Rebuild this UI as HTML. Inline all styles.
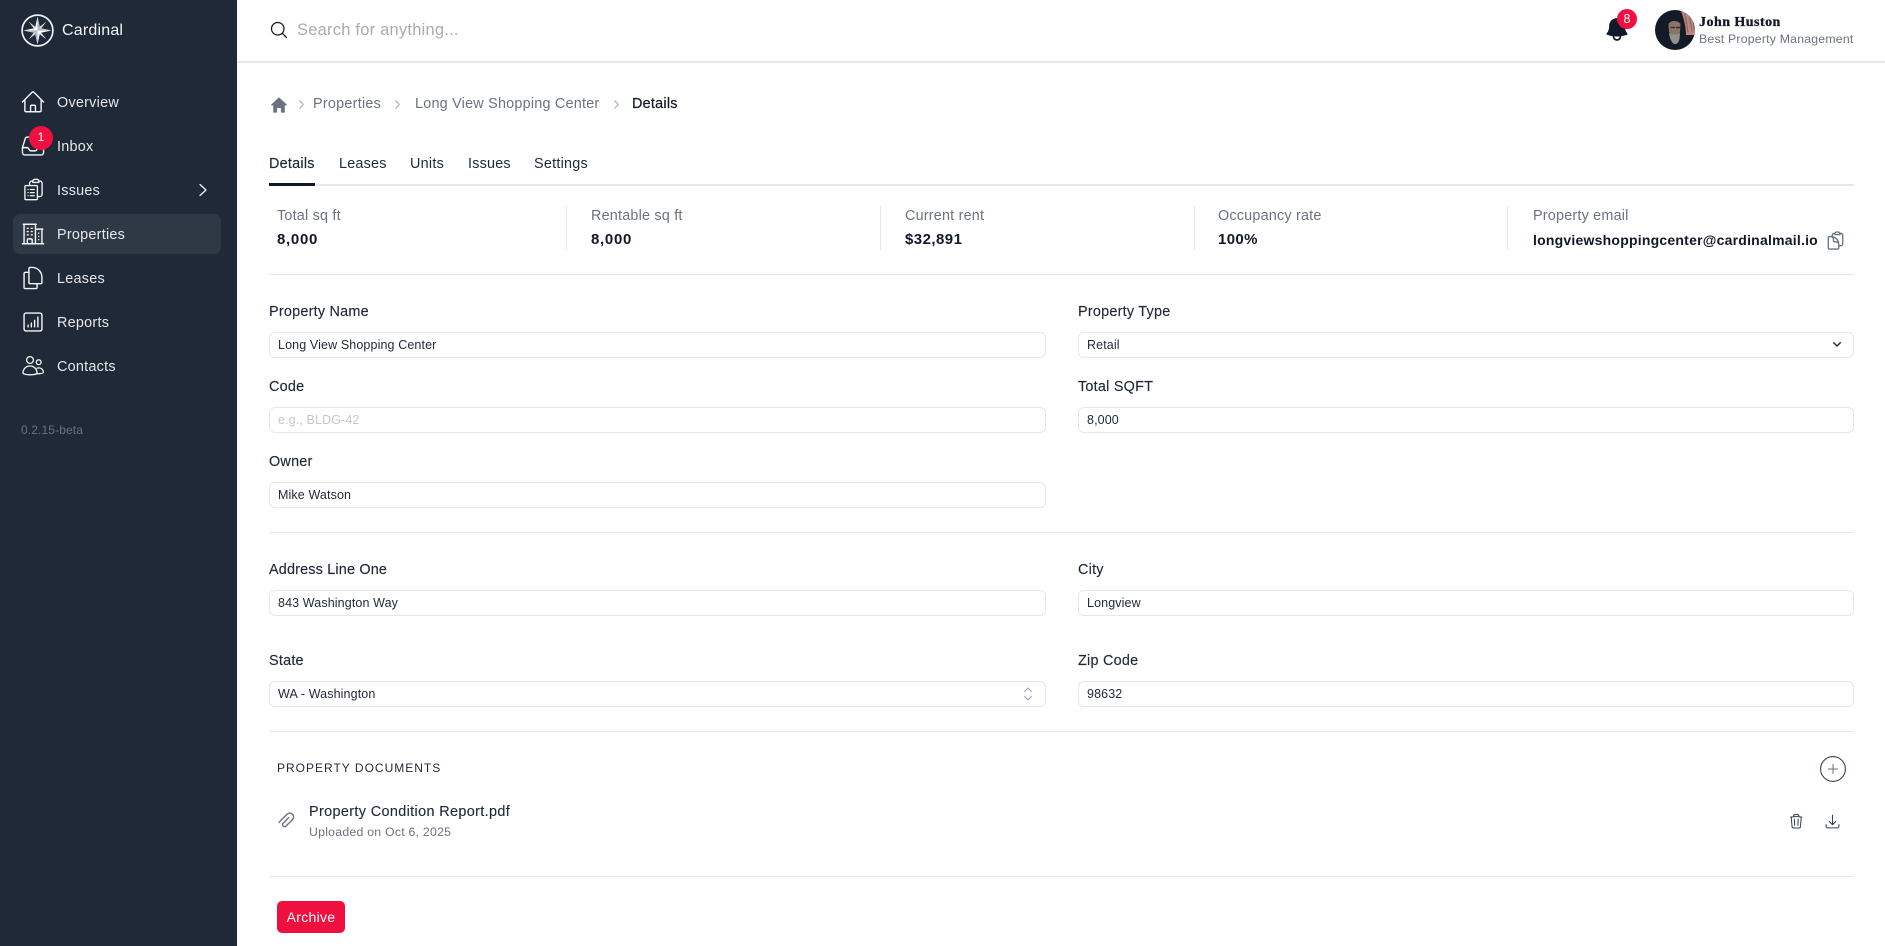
<!DOCTYPE html>
<html lang="en"><head><meta charset="utf-8"><title>Cardinal</title>
<style>
*{box-sizing:border-box;margin:0;padding:0}
html,body{width:1885px;height:946px;overflow:hidden;background:#fff}
body{position:relative;font-family:"Liberation Sans",Arial,sans-serif;color:#1f2937}
.t{position:absolute;white-space:nowrap;line-height:20px;font-size:14.4px;letter-spacing:.25px}
.abs{position:absolute}
svg{position:absolute;fill:none;stroke:currentColor;stroke-width:1.5;stroke-linecap:round;stroke-linejoin:round;overflow:visible}
.side{position:absolute;left:0;top:0;width:237px;height:946px;background:#1f2937;color:#f3f4f6}
.side svg{stroke-width:1.3}
.active{position:absolute;left:13px;top:214px;width:208px;height:40px;border-radius:7px;background:#2f3945}
.nav{color:#e5e7eb}
.hr{position:absolute;left:269px;width:1585px;height:1px;background:#e5e7eb}
.vr{position:absolute;top:206px;width:1px;height:44px;background:#e5e7eb}
.lab{color:#6b7280;font-size:14.4px;letter-spacing:.2px}
.val{font-weight:bold;font-size:15px;letter-spacing:.35px;color:#111827}
.inp{position:absolute;height:26px;border:1px solid #e5e7eb;border-radius:6px;font-size:12.5px;letter-spacing:.12px;line-height:24px;padding-left:8px;color:#1f2937;background:#fff;white-space:nowrap}
.l{left:269px;width:777px}.r{left:1078px;width:776px}
.flab{color:#1f2937;-webkit-text-stroke:.15px #1f2937;letter-spacing:.24px}
</style></head><body>

<div class="side">
  <svg style="left:21px;top:14px" width="33" height="33" viewBox="0 0 33 33">
    <circle cx="16.5" cy="16.5" r="15.4" stroke="#eef0f2" stroke-width="1.7"/>
    <polygon points="7.5,7.5 14.8,13.2 16.5,12.5 18.2,13.2 25.5,7.5 19.8,14.8 20.5,16.5 19.8,18.2 25.5,25.5 18.2,19.8 16.5,20.5 14.8,19.8 7.5,25.5 13.2,18.2 12.5,16.5 13.2,14.8" fill="#e4e7ea" stroke="none"/>
    <polygon points="16.5,2.6 19,14 30.4,16.5 19,19 16.5,30.4 14,19 2.6,16.5 14,14" fill="#f8f9fa" stroke="none"/>
    <polygon points="16.5,2.6 16.5,16.5 30.4,16.5 19,14" fill="#b4bac2" stroke="none"/>
    <polygon points="16.5,30.4 16.5,16.5 2.6,16.5 14,19" fill="#b4bac2" stroke="none"/>
  </svg>
  <div class="t" style="left:62px;top:20.5px;font-size:16px;letter-spacing:.2px;color:#f3f4f6">Cardinal</div>

  <div class="active"></div>

  <svg style="left:20px;top:89px" width="26" height="26" viewBox="0 0 24 24"><path d="M2.25 12l8.954-8.955c.44-.439 1.152-.439 1.591 0L21.75 12M4.5 9.75v10.125c0 .621.504 1.125 1.125 1.125H9.75v-4.875c0-.621.504-1.125 1.125-1.125h2.25c.621 0 1.125.504 1.125 1.125V21h4.125c.621 0 1.125-.504 1.125-1.125V9.75M8.25 21h8.25"/></svg>
  <div class="t nav" style="left:57px;top:92.5px">Overview</div>

  <svg style="left:20px;top:133px" width="26" height="26" viewBox="0 0 24 24"><path d="M2.25 13.5h3.86a2.25 2.25 0 012.012 1.244l.256.512a2.25 2.25 0 002.013 1.244h3.218a2.25 2.25 0 002.013-1.244l.256-.512a2.25 2.25 0 012.013-1.244h3.859m-19.5.338V18a2.25 2.25 0 002.25 2.25h15A2.25 2.25 0 0021.75 18v-4.162c0-.224-.034-.447-.1-.661L19.24 5.338a2.25 2.25 0 00-2.15-1.588H6.911a2.25 2.25 0 00-2.15 1.588L2.35 13.177a2.25 2.25 0 00-.1.661z"/></svg>
  <div class="abs" style="left:29px;top:126px;width:24px;height:24px;border-radius:50%;background:#f0103f;color:#fff;font-size:12px;line-height:23px;text-align:center">1</div>
  <div class="t nav" style="left:57px;top:136.5px">Inbox</div>

  <svg style="left:21px;top:177px" width="25" height="25" viewBox="0 0 24 24"><path d="M9 12h3.75M9 15h3.75M9 18h3.75m3 .75H18a2.25 2.25 0 002.25-2.25V6.108c0-1.135-.845-2.098-1.976-2.192a48.424 48.424 0 00-1.123-.08m-5.801 0c-.065.21-.1.433-.1.664 0 .414.336.75.75.75h4.5a.75.75 0 00.75-.75 2.25 2.25 0 00-.1-.664m-5.8 0A2.251 2.251 0 0113.5 2.25H15c1.012 0 1.867.668 2.15 1.586m-5.8 0c-.376.023-.75.05-1.124.08C9.095 4.01 8.25 4.973 8.25 6.108V8.25m0 0H4.875c-.621 0-1.125.504-1.125 1.125v11.25c0 .621.504 1.125 1.125 1.125h9.75c.621 0 1.125-.504 1.125-1.125V9.375c0-.621-.504-1.125-1.125-1.125H8.25zM6.75 12h.008v.008H6.75V12zm0 3h.008v.008H6.75V15zm0 3h.008v.008H6.75V18z"/></svg>
  <div class="t nav" style="left:57px;top:180.5px">Issues</div>
  <svg style="left:199px;top:184px" width="8" height="12" viewBox="0 0 8 12"><path d="M1 .5L7 6 1 11.5"/></svg>

  <svg style="left:20px;top:221px" width="26" height="26" viewBox="0 0 24 24"><path d="M2.25 21h19.5m-18-18v18m10.5-18v18m6-13.5V21M6.75 6.75h.75m-.75 3h.75m-.75 3h.75m3-6h.75m-.75 3h.75m-.75 3h.75M6.75 21v-3.375c0-.621.504-1.125 1.125-1.125h2.25c.621 0 1.125.504 1.125 1.125V21M3 3h12m-.75 4.5H21m-3.75 3.75h.008v.008h-.008v-.008zm0 3h.008v.008h-.008v-.008zm0 3h.008v.008h-.008v-.008z"/></svg>
  <div class="t nav" style="left:57px;top:224.5px">Properties</div>

  <svg style="left:20px;top:265px" width="26" height="26" viewBox="0 0 24 24"><path d="M15.75 17.25v3.375c0 .621-.504 1.125-1.125 1.125h-9.75a1.125 1.125 0 01-1.125-1.125V7.875c0-.621.504-1.125 1.125-1.125H6.75a9.06 9.06 0 011.5.124m7.5 10.376h3.375c.621 0 1.125-.504 1.125-1.125V11.25c0-4.46-3.243-8.161-7.5-8.876a9.06 9.06 0 00-1.5-.124H9.375c-.621 0-1.125.504-1.125 1.125v3.5m7.5 10.375H9.375a1.125 1.125 0 01-1.125-1.125v-9.25"/></svg>
  <div class="t nav" style="left:57px;top:268.5px">Leases</div>

  <svg style="left:20px;top:309px" width="26" height="26" viewBox="0 0 24 24"><rect x="3.75" y="3.75" width="16.5" height="16.5" rx="1.8"/><path d="M7.5 16.5v-1.5M10.5 16.5v-3.5M13.5 16.5v-6M16.5 16.5v-9"/></svg>
  <div class="t nav" style="left:57px;top:312.5px">Reports</div>

  <svg style="left:20px;top:353px" width="26" height="26" viewBox="0 0 26 26"><circle cx="10" cy="7" r="3.4"/><circle cx="18.7" cy="9.2" r="2.4"/><path d="M3 20c0-4 3-7 7-7s7 3 7 7c0 1-3 1.8-7 1.8S3 21 3 20z"/><path d="M17 15.2c.5-.2 1.2-.3 1.8-.3 2.6 0 4.6 2 4.6 4.4 0 .9-2.2 1.4-6 1.5"/></svg>
  <div class="t nav" style="left:57px;top:356.5px">Contacts</div>

  <div class="t" style="left:21px;top:419.5px;font-size:12px;letter-spacing:.12px;color:#6b7280">0.2.15-beta</div>
</div>

<!-- top bar -->
<div class="abs" style="left:237px;top:61px;width:1648px;height:2px;background:#e5e7eb"></div>
<svg style="left:269px;top:19.5px;color:#111827" width="20" height="20" viewBox="0 0 24 24"><path d="M21 21l-5.197-5.197m0 0A7.5 7.5 0 105.196 5.196a7.5 7.5 0 0010.607 10.607z"/></svg>
<div class="t" style="left:297px;top:19.5px;font-size:16.5px;letter-spacing:.22px;color:#a9abb3">Search for anything...</div>

<svg style="left:1603px;top:15px;color:#111827" width="28" height="29" viewBox="0 0 24 24"><path stroke="none" fill="#111827" fill-rule="evenodd" d="M5.25 9a6.75 6.75 0 0113.5 0v.75c0 2.123.8 4.057 2.118 5.52a.75.75 0 01-.297 1.206c-1.544.57-3.16.99-4.831 1.243a3.75 3.75 0 11-7.48 0 24.585 24.585 0 01-4.831-1.244.75.75 0 01-.298-1.205A8.217 8.217 0 005.25 9.75V9zm4.502 8.9a2.25 2.25 0 104.496 0 25.057 25.057 0 01-4.496 0z"/></svg>
<div class="abs" style="left:1617px;top:9px;width:20px;height:20px;border-radius:50%;background:#f0103f;color:#fff;font-size:12.5px;line-height:20px;text-align:center">8</div>

<svg style="left:1655px;top:10px" width="40" height="40" viewBox="0 0 40 40">
  <defs><clipPath id="av"><circle cx="20" cy="20" r="20"/></clipPath></defs>
  <g clip-path="url(#av)" stroke="none">
    <rect width="40" height="40" fill="#141a26"/>
    <path d="M26 1h14v24h-9c0-8-2-16-5-24z" fill="#b98780"/>
    <path d="M30 4l3 18M34 3l3 18M38 5l1 14" stroke="#8a6360" stroke-width="1.1"/>
    <path d="M13.5 14c2-4 10-4 12 0l-.5 8c-1 2.500-3 3-5.500 3s-4.500-1-5.500-3z" fill="#8a7362"/>
    <path d="M14 23c3 2 8 2 11 0l-.5 6c-1 4-2.500 5-4.500 5s-5-3-6-11z" fill="#92938f"/>
    <path d="M16 17.500h3.500M21.500 17.500h3" stroke="#2a2a30" stroke-width="1.2"/>
  </g>
</svg>
<div class="t" style="left:1699px;top:12.5px;font-family:'Liberation Serif',serif;font-weight:bold;font-size:14px;letter-spacing:.47px;color:#111827;-webkit-text-stroke:.3px #111827">John Huston</div>
<div class="t" style="left:1699px;top:29px;font-size:12.3px;letter-spacing:.2px;color:#6b7280">Best Property Management</div>

<!-- breadcrumb -->
<svg style="left:271px;top:96.5px" width="16" height="16" viewBox="0 0 16 16"><path stroke="none" fill="#6b7280" d="M8 .2L16 7.700 14.900 8.900 13.800 8V15.600H9.900V11H6.100V15.600H2.200V8L1.100 8.900 0 7.700z"/></svg>
<svg style="left:299px;top:100px;color:#9ca3af" width="5" height="9" viewBox="0 0 5 9"><path stroke-width="1" d="M.7.7L4.300 4.500.7 8.300"/></svg>
<div class="t" style="left:313px;top:94px;color:#6b7280">Properties</div>
<svg style="left:395px;top:100px;color:#9ca3af" width="5" height="9" viewBox="0 0 5 9"><path stroke-width="1" d="M.7.7L4.300 4.500.7 8.300"/></svg>
<div class="t" style="left:415px;top:94px;color:#6b7280;letter-spacing:.22px">Long View Shopping Center</div>
<svg style="left:614px;top:100px;color:#9ca3af" width="5" height="9" viewBox="0 0 5 9"><path stroke-width="1" d="M.7.7L4.300 4.500.7 8.300"/></svg>
<div class="t" style="left:632px;top:94px;color:#111827;-webkit-text-stroke:.2px #111827">Details</div>

<!-- tabs -->
<div class="t" style="left:269px;top:154px;color:#1f2937;-webkit-text-stroke:.15px #1f2937">Details</div>
<div class="t" style="left:339px;top:154px;letter-spacing:.2px">Leases</div>
<div class="t" style="left:410px;top:154px">Units</div>
<div class="t" style="left:468px;top:154px;letter-spacing:.2px">Issues</div>
<div class="t" style="left:534px;top:154px">Settings</div>
<div class="abs" style="left:269px;top:184px;width:1585px;height:2px;background:#e5e7eb"></div>
<div class="abs" style="left:269px;top:183px;width:46px;height:3px;background:#111827"></div>

<!-- stats -->
<div class="t lab" style="left:277px;top:206px">Total sq ft</div><div class="t val" style="left:277px;top:230px;letter-spacing:.7px">8,000</div>
<div class="vr" style="left:566px"></div>
<div class="t lab" style="left:591px;top:206px">Rentable sq ft</div><div class="t val" style="left:591px;top:230px;letter-spacing:.7px">8,000</div>
<div class="vr" style="left:880px"></div>
<div class="t lab" style="left:905px;top:206px">Current rent</div><div class="t val" style="left:905px;top:230px;letter-spacing:.45px">$32,891</div>
<div class="vr" style="left:1194px"></div>
<div class="t lab" style="left:1218px;top:206px">Occupancy rate</div><div class="t val" style="left:1218px;top:230px">100%</div>
<div class="vr" style="left:1507px"></div>
<div class="t lab" style="left:1533px;top:206px">Property email</div>
<div class="t" style="left:1533px;top:230px;font-weight:bold;font-size:14px;letter-spacing:.22px;color:#111827">longviewshoppingcenter@cardinalmail.io</div>
<svg style="left:1825px;top:230px;color:#6b7280" width="21" height="21" viewBox="0 0 24 24"><path d="M8.250 7.500V6.108c0-1.135.845-2.098 1.976-2.192.373-.03.748-.057 1.123-.08M15.750 18H18a2.250 2.250 0 002.250-2.250V6.108c0-1.135-.845-2.098-1.976-2.192a48.424 48.424 0 00-1.123-.08M15.750 18.750v-1.875a3.375 3.375 0 00-3.375-3.375h-1.500a1.125 1.125 0 01-1.125-1.125v-1.500A3.375 3.375 0 006.375 7.500H5.250m11.900-3.664A2.251 2.251 0 0015 2.250h-1.500a2.251 2.251 0 00-2.150 1.586m5.800 0c.065.21.1.433.1.664v.75h-6V4.500c0-.231.035-.454.1-.664M6.750 7.500H4.875c-.621 0-1.125.504-1.125 1.125v12c0 .621.504 1.125 1.125 1.125h9.750c.621 0 1.125-.504 1.125-1.125V16.500a9 9 0 00-9-9z"/></svg>
<div class="hr" style="top:274px"></div>

<!-- form -->
<div class="t flab" style="left:269px;top:301.5px">Property Name</div>
<div class="inp l" style="top:332px">Long View Shopping Center</div>
<div class="t flab" style="left:1078px;top:301.5px">Property Type</div>
<div class="inp r" style="top:332px">Retail</div>
<svg style="left:1833px;top:342px;color:#1f2937" width="8" height="5" viewBox="0 0 8 5"><path stroke-width="1.4" d="M.7.7L4 4 7.300.7"/></svg>

<div class="t flab" style="left:269px;top:376.500px">Code</div>
<div class="inp l" style="top:407px;color:#c4c7cc">e.g., BLDG-42</div>
<div class="t flab" style="left:1078px;top:376.500px">Total SQFT</div>
<div class="inp r" style="top:407px">8,000</div>

<div class="t flab" style="left:269px;top:451.500px">Owner</div>
<div class="inp l" style="top:482px">Mike Watson</div>
<div class="hr" style="top:532px"></div>

<div class="t flab" style="left:269px;top:559.500px;letter-spacing:.18px">Address Line One</div>
<div class="inp l" style="top:590px">843 Washington Way</div>
<div class="t flab" style="left:1078px;top:559.500px">City</div>
<div class="inp r" style="top:590px">Longview</div>

<div class="t flab" style="left:269px;top:650.500px">State</div>
<div class="inp l" style="top:681px">WA - Washington</div>
<svg style="left:1024px;top:687px;color:#9ca3af" width="8" height="14" viewBox="0 0 8 14"><path stroke-width="1.1" d="M.7 4.500L4 1l3.300 3.500M.7 9.500L4 13l3.300-3.500"/></svg>
<div class="t flab" style="left:1078px;top:650.500px">Zip Code</div>
<div class="inp r" style="top:681px">98632</div>
<div class="hr" style="top:731px"></div>

<!-- documents -->
<div class="t" style="left:277px;top:758px;font-size:12px;letter-spacing:1px;color:#1f2937">PROPERTY DOCUMENTS</div>
<svg style="left:1820px;top:756px;color:#374151" width="26" height="26" viewBox="0 0 26 26"><circle cx="13" cy="13" r="12.4" stroke-width="1.1"/><path stroke-width="1" stroke="#6b7280" d="M13 8.400v9.200M8.400 13h9.200"/></svg>
<svg style="left:278px;top:812px;color:#6b7280" width="18" height="18" viewBox="-7.500 -7.500 15 15"><path stroke-width="1.200" transform="rotate(45)" d="M-1 -3V3.500a1.700 1.700 0 0 0 3.400 0V-4a3.200 3.200 0 0 0-6.400 0V4a4 4 0 0 0 .3 1.500"/></svg>
<div class="t" style="left:309px;top:802px;letter-spacing:.37px;-webkit-text-stroke:.12px #1f2937">Property Condition Report.pdf</div>
<div class="t" style="left:309px;top:822px;font-size:12.3px;letter-spacing:.24px;color:#6b7280">Uploaded on Oct 6, 2025</div>
<svg style="left:1788px;top:813px;color:#374151" width="16.500" height="16.500" viewBox="0 0 24 24"><path d="M14.740 9l-.346 9m-4.788 0L9.260 9m9.968-3.210c.342.052.682.107 1.022.166m-1.022-.165L18.160 19.673a2.250 2.250 0 01-2.244 2.077H8.084a2.250 2.250 0 01-2.244-2.077L4.772 5.790m14.456 0a48.108 48.108 0 00-3.478-.397m-12 .562c.34-.059.68-.114 1.022-.165m0 0a48.110 48.110 0 013.478-.397m7.500 0v-.916c0-1.180-.91-2.164-2.090-2.201a51.964 51.964 0 00-3.320 0c-1.180.037-2.090 1.022-2.090 2.201v.916m7.500 0a48.667 48.667 0 00-7.500 0"/></svg>
<svg style="left:1823.500px;top:812.500px;color:#374151" width="17" height="17" viewBox="0 0 24 24"><path d="M3 16.500v2.250A2.250 2.250 0 005.250 21h13.500A2.250 2.250 0 0021 18.750V16.500M16.500 12L12 16.500m0 0L7.500 12m4.500 4.500V3"/></svg>
<div class="hr" style="top:876px"></div>

<div class="abs" style="left:277px;top:901px;width:68px;height:32px;border-radius:5px;background:#f0103f;color:#fff;font-size:14px;letter-spacing:.3px;line-height:32px;text-align:center">Archive</div>
</body></html>
